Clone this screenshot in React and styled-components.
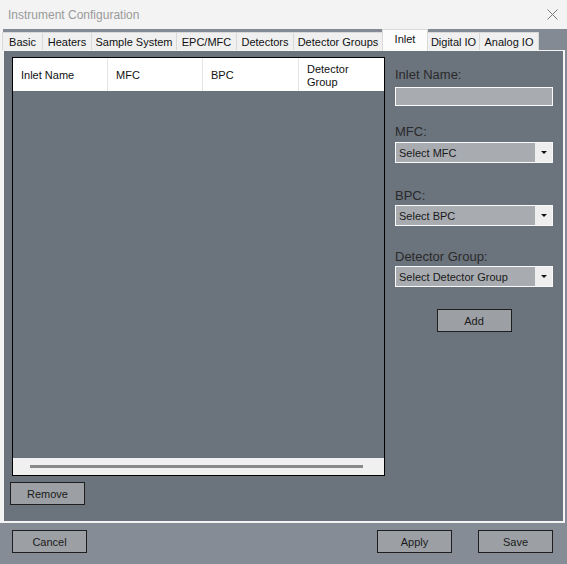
import React from "react";
import styled, { createGlobalStyle } from "styled-components";

const GlobalStyle = createGlobalStyle`
  html, body {
    margin: 0;
    padding: 0;
    background: #868c96;
  }
  body {
    font-family: "Liberation Sans", Arial, sans-serif;
  }
`;

const Window = styled.div`
  width: 567px;
  height: 564px;
  display: flex;
  flex-direction: column;
  background: #868c96;
  overflow: hidden;
`;

const TitleBar = styled.div`
  height: 29px;
  flex: none;
  display: flex;
  align-items: center;
  justify-content: space-between;
  padding: 0 9px 0 8px;
  background: #f3f3f3;
  color: #9a9a9a;
  font-size: 12px;
`;

const TabStrip = styled.div`
  height: 21px;
  flex: none;
  display: flex;
  align-items: flex-end;
  padding-left: 3px;
  background: linear-gradient(to right, #f4f4f4 0 3px, #848a93 3px);
`;

const Tab = styled.div`
  box-sizing: border-box;
  width: ${(p) => p.w}px;
  height: ${(p) => (p.active ? 22 : 18)}px;
  margin-bottom: ${(p) => (p.active ? -1 : 0)}px;
  position: relative;
  z-index: ${(p) => (p.active ? 2 : 1)};
  display: flex;
  align-items: ${(p) => (p.active ? "flex-start" : "center")};
  padding-top: ${(p) => (p.active ? 3 : 0)}px;
  justify-content: center;
  background: ${(p) => (p.active ? "#fcfcfc" : "#f0f0f0")};
  border: 1px solid #d9d9d9;
  border-bottom: none;
  margin-left: -1px;
  font-size: 11px;
  color: #111;
  white-space: nowrap;
`;

const Panel = styled.div`
  height: 473px;
  flex: none;
  box-sizing: border-box;
  margin-right: 2px;
  border: 2px solid #f4f4f4;
  border-left-width: 4px;
  border-top-width: 1px;
  background: #6b737d;
  display: flex;
  padding: 6px 0 0 8px;
`;

const LeftCol = styled.div`
  width: 373px;
  display: flex;
  flex-direction: column;
`;

const Grid = styled.div`
  height: 419px;
  box-sizing: border-box;
  border: 1px solid #000;
  display: flex;
  flex-direction: column;
`;

const HeaderRow = styled.div`
  height: 33px;
  background: #fff;
  display: flex;
`;

const HeaderCell = styled.div`
  box-sizing: border-box;
  width: ${(p) => p.w}px;
  flex: ${(p) => (p.w ? "none" : 1)};
  border-right: ${(p) => (p.w ? "1px solid #e5e5e5" : "none")};
  padding: 2px 0 0 8px;
  display: flex;
  align-items: center;
  font-size: 11px;
  line-height: 13px;
  color: #111;
`;

const GridBody = styled.div`
  flex: 1;
`;

const HScroll = styled.div`
  height: 17px;
  background: #f0f0f0;
  display: flex;
  align-items: center;
  padding: 0 21px 0 17px;
`;

const ScrollThumb = styled.div`
  flex: 1;
  height: 3px;
  background: #8a8a8a;
`;

const Button = styled.button`
  box-sizing: border-box;
  width: 75px;
  height: 23px;
  padding: 0;
  background: #9ca0a5;
  border: 1px solid #1e1e1e;
  color: #1a1a1a;
  font-family: "Liberation Sans", Arial, sans-serif;
  font-size: 11px;
  margin-top: ${(p) => p.mt || 0}px;
  margin-left: ${(p) => p.ml || 0}px;
  align-self: ${(p) => p.align || "auto"};
`;

const RightCol = styled.div`
  width: 158px;
  margin-left: 10px;
  display: flex;
  flex-direction: column;
`;

const Label = styled.div`
  margin-top: ${(p) => p.mt}px;
  font-size: 13px;
  line-height: 16px;
  color: #2a2a2a;
`;

const TextBox = styled.div`
  margin-top: 4px;
  height: 19px;
  box-sizing: border-box;
  border: 1px solid #fafafa;
  background: #a8abb0;
`;

const Select = styled.div`
  margin-top: ${(p) => p.mt}px;
  height: 21px;
  box-sizing: border-box;
  border: 1px solid #fafafa;
  background: #a8abb0;
  display: flex;
  font-size: 11px;
  color: #1a1a1a;
`;

const SelectText = styled.div`
  flex: 1;
  display: flex;
  align-items: center;
  padding-left: 3px;
`;

const Arrow = styled.div`
  width: 17px;
  background: #eeeeee;
  display: flex;
  align-items: center;
  justify-content: center;
  &::after {
    content: "";
    border-left: 3px solid transparent;
    border-right: 3px solid transparent;
    border-top: 3px solid #111;
  }
`;

const Footer = styled.div`
  flex: 1;
  display: flex;
  align-items: flex-start;
  padding: 7px 14px 0 12px;
`;

const Spacer = styled.div`
  flex: 1;
`;

const CloseIcon = () => (
  <svg width="11" height="11" viewBox="0 0 11 11">
    <path d="M0.5 0.5 L10.5 10.5 M10.5 0.5 L0.5 10.5" stroke="#7a7a7a" strokeWidth="1" />
  </svg>
);

const tabs = [
  ["Basic", 41],
  ["Heaters", 50],
  ["Sample System", 86],
  ["EPC/MFC", 61],
  ["Detectors", 58],
  ["Detector Groups", 90],
  ["Inlet", 46],
  ["Digital IO", 53],
  ["Analog IO", 60],
];

const selects = [
  ["MFC:", "Select MFC", 18, 2],
  ["BPC:", "Select BPC", 25, 1],
  ["Detector Group:", "Select Detector Group", 23, 1],
];

export default function App() {
  return (
    <>
      <GlobalStyle />
      <Window>
        <TitleBar>
          <span>Instrument Configuration</span>
          <CloseIcon />
        </TitleBar>
        <TabStrip>
          {tabs.map(([name, w]) => (
            <Tab key={name} w={w} active={name === "Inlet"}>
              {name}
            </Tab>
          ))}
        </TabStrip>
        <Panel>
          <LeftCol>
            <Grid>
              <HeaderRow>
                <HeaderCell w={95}>Inlet Name</HeaderCell>
                <HeaderCell w={95}>MFC</HeaderCell>
                <HeaderCell w={96}>BPC</HeaderCell>
                <HeaderCell>
                  Detector
                  <br />
                  Group
                </HeaderCell>
              </HeaderRow>
              <GridBody />
              <HScroll>
                <ScrollThumb />
              </HScroll>
            </Grid>
            <Button mt={6} ml={-2}>Remove</Button>
          </LeftCol>
          <RightCol>
            <Label mt={10}>Inlet Name:</Label>
            <TextBox />
            {selects.map(([label, text, mt, smt]) => (
              <React.Fragment key={label}>
                <Label mt={mt}>{label}</Label>
                <Select mt={smt}>
                  <SelectText>{text}</SelectText>
                  <Arrow />
                </Select>
              </React.Fragment>
            ))}
            <Button mt={22} align="center">Add</Button>
          </RightCol>
        </Panel>
        <Footer>
          <Button>Cancel</Button>
          <Spacer />
          <Button>Apply</Button>
          <Button ml={26}>Save</Button>
        </Footer>
      </Window>
    </>
  );
}
